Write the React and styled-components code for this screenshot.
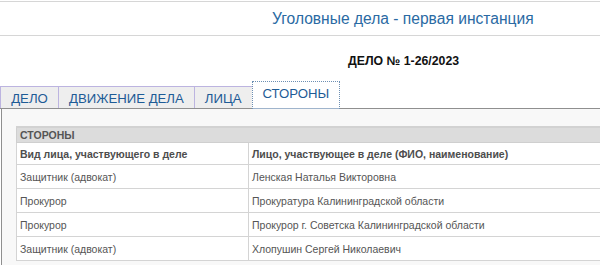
import styled, { createGlobalStyle } from "styled-components";

const GlobalStyle = createGlobalStyle`
    body {
        margin: 0;
        background: #fff;
        font-family: "Liberation Sans", Arial, sans-serif;
    }
`;

const tabs = ["ДЕЛО", "ДВИЖЕНИЕ ДЕЛА", "ЛИЦА", "СТОРОНЫ"];

const rows = [
    ["Защитник (адвокат)", "Ленская Наталья Викторовна"],
    ["Прокурор", "Прокуратура Калининградской области"],
    ["Прокурор", "Прокурор г. Советска Калининградской области"],
    ["Защитник (адвокат)", "Хлопушин Сергей Николаевич"],
];

export default function App() {
    const active = "СТОРОНЫ";

    return (
        <Page>
            <GlobalStyle />
            <Header>
                <Title>Уголовные дела - первая инстанция</Title>
            </Header>
            <CaseNumber>ДЕЛО № 1-26/2023</CaseNumber>
            <TabList>
                {tabs.map((tab) => (
                    <Tab key={tab} $active={tab === active}>
                        {tab}
                    </Tab>
                ))}
            </TabList>
            <Panel>
                <Table>
                    <tbody>
                        <tr>
                            <Caption colSpan={2}>СТОРОНЫ</Caption>
                        </tr>
                        <tr>
                            <HeadCell $first>Вид лица, участвующего в деле</HeadCell>
                            <HeadCell>Лицо, участвующее в деле (ФИО, наименование)</HeadCell>
                        </tr>
                        {rows.map(([kind, name], i) => (
                            <tr key={i}>
                                <Cell $first>{kind}</Cell>
                                <Cell>{name}</Cell>
                            </tr>
                        ))}
                    </tbody>
                </Table>
            </Panel>
        </Page>
    );
}

const Page = styled.div`
    width: 600px;
    height: 265px;
    overflow: hidden;
    padding-top: 1px;
    box-sizing: border-box;
`;

const Header = styled.header`
    border-top: 1px solid #d6d6d6;
    border-bottom: 1px solid #d6d6d6;
    height: 33px;
    display: flex;
    align-items: center;
    padding-left: 272px;
`;

const Title = styled.h1`
    margin: 0;
    font-size: 15.6px;
    font-weight: normal;
    color: #2a6aa3;
`;

const CaseNumber = styled.div`
    padding: 18px 0 0 348px;
    height: 26px;
    font-size: 12.3px;
    font-weight: bold;
    color: #111;
`;

const TabList = styled.ul`
    list-style: none;
    margin: 0;
    padding: 0;
    height: 28px;
    display: flex;
    align-items: flex-end;
    border-bottom: 1px solid #8f8f8f;
`;

const Tab = styled.li`
    box-sizing: border-box;
    font-size: 13.2px;
    color: #1d5b96;
    padding: 2px 10px 0;
    line-height: 20px;
    text-align: center;
    height: ${(props) => (props.$active ? "28px" : "22px")};
    background: ${(props) => (props.$active ? "#fff" : "#eeeeee")};
    border: ${(props) => (props.$active ? "1px dotted #6d8fb3" : "1px solid #bcb4e0")};
    border-bottom: none;
    margin-left: -1px;
    margin-bottom: ${(props) => (props.$active ? "-1px" : "0")};
    box-shadow: ${(props) => (props.$active ? "inset 0 -2px 0 -1px #9fb4cc" : "none")};

    &:first-child {
        margin-left: 0;
        min-width: 59px;
    }
`;

const Panel = styled.section`
    background: #f8f8f8;
    border-left: 1px solid #8f8f8f;
    margin-left: 1px;
    padding: 17px 0 20px 14px;
`;

const Table = styled.table`
    border-collapse: collapse;
    width: 585px;
    background: #fff;
    font-size: 10.5px;
    color: #555;
`;

const Caption = styled.td`
    background: #dcdcdc;
    border: 1px solid #cfcfcf;
    border-top: 2px solid #d2d2d2;
    font-weight: bold;
    height: 14px;
    padding: 0 3px;
    color: #555;
`;

const HeadCell = styled.td`
    border: 1px solid #d4d4d4;
    font-weight: bold;
    height: 21px;
    padding: 0 3px;
    width: ${(props) => (props.$first ? "225px" : "auto")};
    color: #4d4d4d;
`;

const Cell = styled.td`
    border: 1px solid #d4d4d4;
    height: 23px;
    padding: 0 3px;
`;
